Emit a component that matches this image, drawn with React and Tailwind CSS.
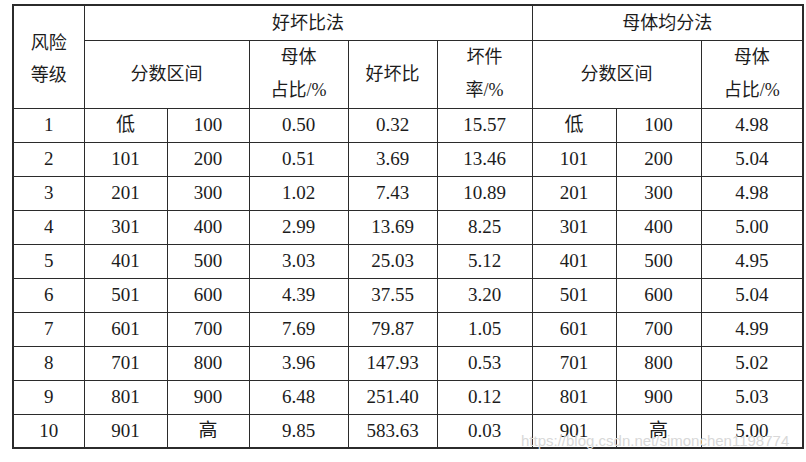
import React from "react";

const rows = [
  ["1", "低", "100", "0.50", "0.32", "15.57", "低", "100", "4.98"],
  ["2", "101", "200", "0.51", "3.69", "13.46", "101", "200", "5.04"],
  ["3", "201", "300", "1.02", "7.43", "10.89", "201", "300", "4.98"],
  ["4", "301", "400", "2.99", "13.69", "8.25", "301", "400", "5.00"],
  ["5", "401", "500", "3.03", "25.03", "5.12", "401", "500", "4.95"],
  ["6", "501", "600", "4.39", "37.55", "3.20", "501", "600", "5.04"],
  ["7", "601", "700", "7.69", "79.87", "1.05", "601", "700", "4.99"],
  ["8", "701", "800", "3.96", "147.93", "0.53", "701", "800", "5.02"],
  ["9", "801", "900", "6.48", "251.40", "0.12", "801", "900", "5.03"],
  ["10", "901", "高", "9.85", "583.63", "0.03", "901", "高", "5.00"],
];

const widths = [71, 83, 82, 99, 89, 95, 84, 85, 102];

const cell = "border border-[#2b2b2b] text-center align-middle p-0";

export default function App() {
  return (
    <div
      className="relative w-[806px] h-[462px] bg-white pt-[4px] pl-[12px] text-[#1c1c1c] text-[19px]"
      style={{ fontFamily: '"Liberation Serif", "Noto Sans CJK SC", serif' }}
    >
      <table className="table-fixed border-collapse border-2 border-[#2b2b2b] w-[791px]">
        <colgroup>
          {widths.map((w, i) => (
            <col key={i} style={{ width: w }} />
          ))}
        </colgroup>
        <thead>
          <tr className="h-[35px]">
            <th rowSpan={2} className={`${cell} font-normal text-[18px] leading-[32px] pt-[4px]`}>
              风险
              <br />
              等级
            </th>
            <th colSpan={5} className={`${cell} font-normal text-[18px] pt-[2px]`}>
              好坏比法
            </th>
            <th colSpan={3} className={`${cell} font-normal text-[18px] pt-[2px]`}>
              母体均分法
            </th>
          </tr>
          <tr className="h-[68px]">
            <th colSpan={2} className={`${cell} font-normal text-[18px]`}>
              分数区间
            </th>
            <th className={`${cell} font-normal text-[18px] leading-[33px]`}>
              母体
              <br />
              占比/%
            </th>
            <th className={`${cell} font-normal text-[18px]`}>好坏比</th>
            <th className={`${cell} font-normal text-[18px] leading-[33px]`}>
              坏件
              <br />
              率/%
            </th>
            <th colSpan={2} className={`${cell} font-normal text-[18px]`}>
              分数区间
            </th>
            <th className={`${cell} font-normal text-[18px] leading-[33px]`}>
              母体
              <br />
              占比/%
            </th>
          </tr>
        </thead>
        <tbody>
          {rows.map((r) => (
            <tr key={r[0]} className="h-[34px]">
              {r.map((v, i) => (
                <td key={i} className={cell}>
                  {v}
                </td>
              ))}
            </tr>
          ))}
        </tbody>
      </table>
      <span
        className="absolute left-[521px] top-[430px] whitespace-nowrap text-[15px] text-[#d8d8d8]"
        style={{ fontFamily: '"Liberation Sans", sans-serif' }}
      >
        https://blog.csdn.net/simonchen1198774
      </span>
    </div>
  );
}
